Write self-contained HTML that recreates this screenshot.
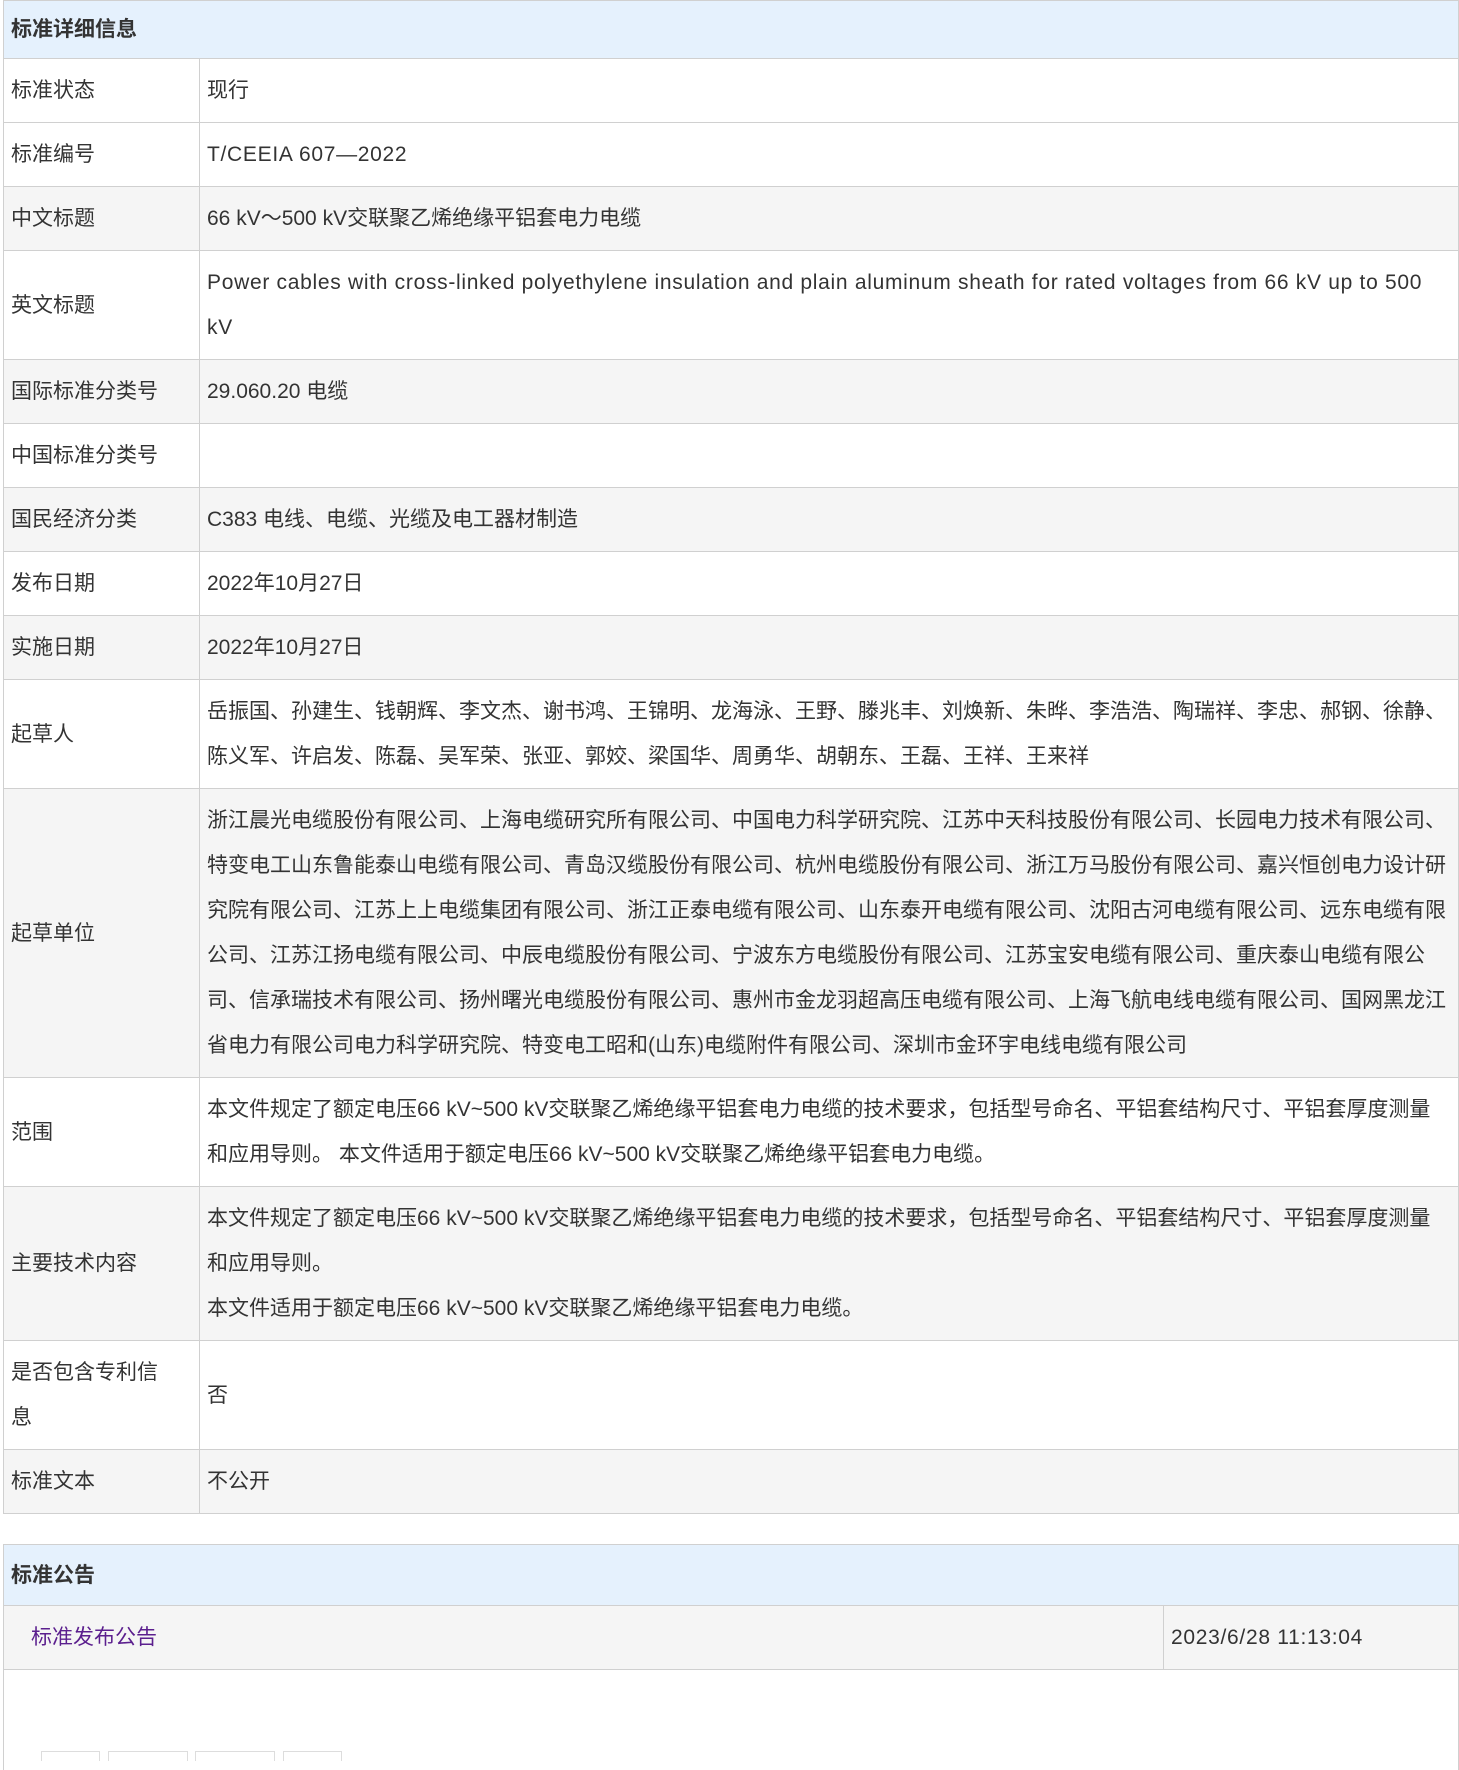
<!DOCTYPE html>
<html><head><meta charset="utf-8"><style>
*{margin:0;padding:0;box-sizing:border-box}
body{width:1459px;height:1754px;background:#fff;font-family:"Liberation Sans","Noto Sans CJK SC",sans-serif;font-size:21px;color:#333;position:relative;overflow:hidden}
table{position:absolute;left:3px;width:1456px;border-collapse:collapse;table-layout:fixed}
td,th{border:1px solid #d0d0d0;line-height:45px;vertical-align:middle;text-align:left;white-space:nowrap;overflow:hidden}
th{background:#e5f1fd;font-weight:bold;padding:6px 7px;height:58px}
td{padding:9px 7px}
tr.g td{background:#f5f5f5}
a{color:#5b1f8e;text-decoration:none}
.e{letter-spacing:0.7px}
.box{position:absolute;top:1751px;height:10px;border:1px solid #ddd;border-bottom:none}
</style></head><body>
<table style="top:0">
<colgroup><col style="width:196px"><col></colgroup>
<tr><th colspan="2">标准详细信息</th></tr>
<tr><td>标准状态</td><td>现行</td></tr>
<tr><td>标准编号</td><td class="e">T/CEEIA 607—2022</td></tr>
<tr class="g"><td>中文标题</td><td>66 kV～500 kV交联聚乙烯绝缘平铝套电力电缆</td></tr>
<tr><td>英文标题</td><td class="e">Power cables with cross-linked polyethylene insulation and plain aluminum sheath for rated voltages from 66 kV up to 500<br>kV</td></tr>
<tr class="g"><td>国际标准分类号</td><td>29.060.20 电缆</td></tr>
<tr><td>中国标准分类号</td><td></td></tr>
<tr class="g"><td>国民经济分类</td><td>C383 电线、电缆、光缆及电工器材制造</td></tr>
<tr><td>发布日期</td><td>2022年10月27日</td></tr>
<tr class="g"><td>实施日期</td><td>2022年10月27日</td></tr>
<tr><td>起草人</td><td>岳振国、孙建生、钱朝辉、李文杰、谢书鸿、王锦明、龙海泳、王野、滕兆丰、刘焕新、朱晔、李浩浩、陶瑞祥、李忠、郝钢、徐静、<br>陈义军、许启发、陈磊、吴军荣、张亚、郭姣、梁国华、周勇华、胡朝东、王磊、王祥、王来祥</td></tr>
<tr class="g"><td>起草单位</td><td>浙江晨光电缆股份有限公司、上海电缆研究所有限公司、中国电力科学研究院、江苏中天科技股份有限公司、长园电力技术有限公司、<br>特变电工山东鲁能泰山电缆有限公司、青岛汉缆股份有限公司、杭州电缆股份有限公司、浙江万马股份有限公司、嘉兴恒创电力设计研<br>究院有限公司、江苏上上电缆集团有限公司、浙江正泰电缆有限公司、山东泰开电缆有限公司、沈阳古河电缆有限公司、远东电缆有限<br>公司、江苏江扬电缆有限公司、中辰电缆股份有限公司、宁波东方电缆股份有限公司、江苏宝安电缆有限公司、重庆泰山电缆有限公<br>司、信承瑞技术有限公司、扬州曙光电缆股份有限公司、惠州市金龙羽超高压电缆有限公司、上海飞航电线电缆有限公司、国网黑龙江<br>省电力有限公司电力科学研究院、特变电工昭和(山东)电缆附件有限公司、深圳市金环宇电线电缆有限公司</td></tr>
<tr><td>范围</td><td>本文件规定了额定电压66 kV~500 kV交联聚乙烯绝缘平铝套电力电缆的技术要求，包括型号命名、平铝套结构尺寸、平铝套厚度测量<br>和应用导则。 本文件适用于额定电压66 kV~500 kV交联聚乙烯绝缘平铝套电力电缆。</td></tr>
<tr class="g"><td>主要技术内容</td><td>本文件规定了额定电压66 kV~500 kV交联聚乙烯绝缘平铝套电力电缆的技术要求，包括型号命名、平铝套结构尺寸、平铝套厚度测量<br>和应用导则。<br>本文件适用于额定电压66 kV~500 kV交联聚乙烯绝缘平铝套电力电缆。</td></tr>
<tr><td>是否包含专利信<br>息</td><td>否</td></tr>
<tr class="g"><td>标准文本</td><td>不公开</td></tr>
</table>
<table style="top:1544px">
<colgroup><col><col style="width:295px"></colgroup>
<tr><th colspan="2" style="height:61px">标准公告</th></tr>
<tr class="g"><td style="padding-left:27px"><a>标准发布公告</a></td><td class="e">2023/6/28 11:13:04</td></tr>
<tr><td colspan="2" style="height:100px;border-bottom:none"></td></tr>
</table>
<div class="box" style="left:41px;width:59px"></div>
<div class="box" style="left:108px;width:80px"></div>
<div class="box" style="left:195px;width:80px"></div>
<div class="box" style="left:283px;width:59px"></div>
</body></html>
